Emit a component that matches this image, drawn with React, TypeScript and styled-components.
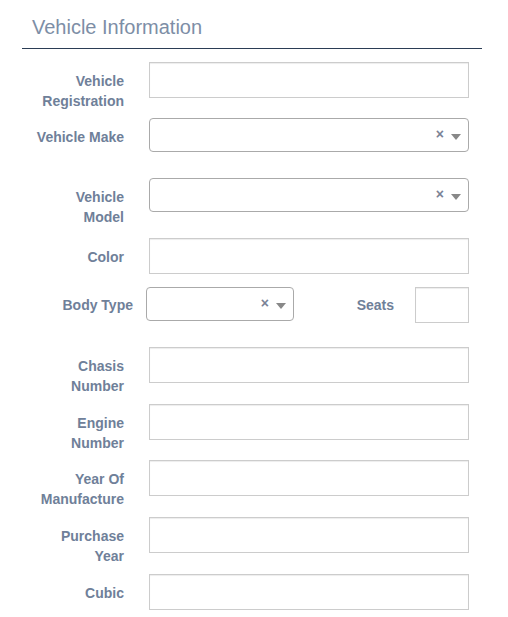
import React from 'react'
import styled, { createGlobalStyle } from 'styled-components'

const GlobalStyle = createGlobalStyle`
  html, body {
    margin: 0;
    padding: 0;
    background: #ffffff;
    font-family: 'Liberation Sans', Arial, sans-serif;
  }
`

const Wrapper = styled.div`
  width: 460px;
  margin-left: 22px;
`

const Heading = styled.h3`
  margin: 0;
  padding: 15px 0 9px 10px;
  font-size: 20px;
  line-height: 24px;
  font-weight: 400;
  color: #7d8ea6;
  border-bottom: 1px solid #2b3d55;
`

const Form = styled.div`
  display: flex;
  flex-direction: column;
  margin-top: 13px;
`

const FormRow = styled.div<{ $h: number }>`
  display: grid;
  grid-template-columns: 92px 320px;
  column-gap: 25px;
  align-items: start;
  padding-left: 10px;
  min-height: ${({ $h }) => $h}px;
`

const Label = styled.label<{ $pad?: number }>`
  padding-top: ${({ $pad }) => $pad ?? 9}px;
  text-align: right;
  font-size: 14px;
  line-height: 20px;
  font-weight: 700;
  color: #6f8099;
`

const TextInput = styled.div<{ $w?: number }>`
  box-sizing: border-box;
  width: ${({ $w }) => ($w ? `${$w}px` : '100%')};
  height: 36px;
  border: 1px solid #cccccc;
  background: #fff;
  box-shadow: inset 0 1px 1px rgba(0, 0, 0, 0.075);
`

const SelectBox = styled.div<{ $w?: number }>`
  position: relative;
  box-sizing: border-box;
  width: ${({ $w }) => ($w ? `${$w}px` : '100%')};
  height: 34px;
  border: 1px solid #aaaaaa;
  border-radius: 4px;
  background: #fff;
`

const Clear = styled.span`
  position: absolute;
  right: 24px;
  top: 7px;
  font-size: 14px;
  line-height: 16px;
  font-weight: 700;
  color: #7a8296;
`

const Arrow = styled.span`
  position: absolute;
  right: 7px;
  top: 15px;
  width: 0;
  height: 0;
  border-style: solid;
  border-width: 6px 5px 0 5px;
  border-color: #888888 transparent transparent transparent;
`

const SplitRow = styled.div<{ $h: number }>`
  display: flex;
  align-items: flex-start;
  padding-right: 13px;
  min-height: ${({ $h }) => $h}px;
`

const BodyLabel = styled(Label)`
  width: 111px;
  margin-right: 13px;
  flex-shrink: 0;
`

const SeatsLabel = styled(Label)`
  flex: 1;
  padding-right: 21px;
`

function Select({ width }: { width?: number }) {
  return (
    <SelectBox $w={width}>
      <Clear>×</Clear>
      <Arrow />
    </SelectBox>
  )
}

type Field = { label: React.ReactNode; kind: 'text' | 'select'; h: number }

const TOP: Field[] = [
  { label: <>Vehicle<br />Registration</>, kind: 'text', h: 56 },
  { label: 'Vehicle Make', kind: 'select', h: 60 },
  { label: <>Vehicle<br />Model</>, kind: 'select', h: 60 },
  { label: 'Color', kind: 'text', h: 49 },
]

const BOTTOM: Field[] = [
  { label: <>Chasis<br />Number</>, kind: 'text', h: 57 },
  { label: <>Engine<br />Number</>, kind: 'text', h: 56 },
  { label: <>Year Of<br />Manufacture</>, kind: 'text', h: 57 },
  { label: <>Purchase<br />Year</>, kind: 'text', h: 57 },
  { label: 'Cubic', kind: 'text', h: 40 },
]

function renderRow(f: Field, i: number) {
  return (
    <FormRow key={i} $h={f.h}>
      <Label>{f.label}</Label>
      {f.kind === 'select' ? <Select /> : <TextInput />}
    </FormRow>
  )
}

export default function App() {
  return (
    <>
      <GlobalStyle />
      <Wrapper>
        <Heading>Vehicle Information</Heading>
        <Form>
          {TOP.map(renderRow)}
          <SplitRow $h={60}>
            <BodyLabel $pad={8}>Body Type</BodyLabel>
            <Select width={148} />
            <SeatsLabel $pad={8}>Seats</SeatsLabel>
            <TextInput $w={54} />
          </SplitRow>
          {BOTTOM.map(renderRow)}
        </Form>
      </Wrapper>
    </>
  )
}
